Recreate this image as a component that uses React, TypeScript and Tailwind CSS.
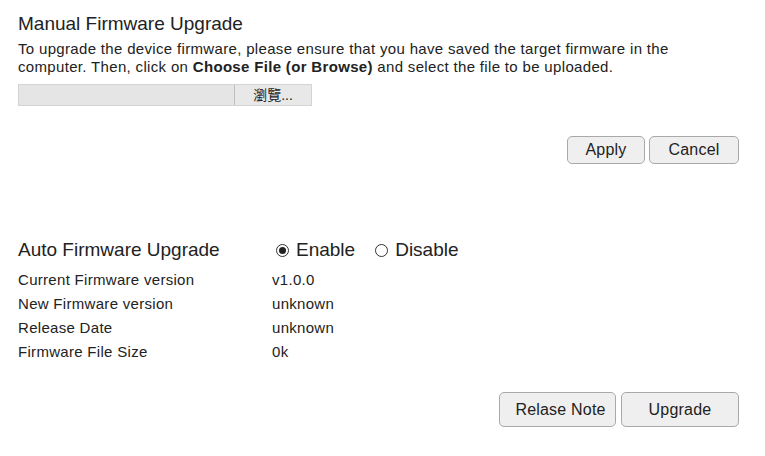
import React, { useState } from 'react';

const rows: [string, string][] = [
  ['Current Firmware version', 'v1.0.0'],
  ['New Firmware version', 'unknown'],
  ['Release Date', 'unknown'],
  ['Firmware File Size', '0k'],
];

function Radio({ checked, label, onClick }: { checked: boolean; label: string; onClick: () => void }) {
  return (
    <button type="button" onClick={onClick} className="flex items-center gap-[7px]">
      <span className="w-[13px] h-[13px] rounded-full border border-[#333] bg-white flex items-center justify-center">
        {checked && <span className="w-[7px] h-[7px] rounded-full bg-[#222]" />}
      </span>
      <span>{label}</span>
    </button>
  );
}

export default function App() {
  const [auto, setAuto] = useState(true);

  const btn =
    'rounded-[5px] border border-[#a9a9a9] bg-[#efefef] text-[16px] tracking-[0.2px] text-[#222] hover:bg-[#e5e5e5]';

  return (
    <div className="w-[765px] h-[456px] bg-white text-[#222] font-['Liberation_Sans',Arial,sans-serif] px-[18px] pt-[12px]">
      <h2 className="text-[19px] leading-[24px]">Manual Firmware Upgrade</h2>
      <p className="text-[15px] leading-[18px] tracking-[0.33px] mt-[4px] w-[700px]">
        To upgrade the device firmware, please ensure that you have saved the target firmware in the
        <br />
        computer. Then, click on <b>Choose File (or Browse)</b> and select the file to be uploaded.
      </p>
      <div className="flex mt-[8px] w-[294px] h-[22px] border border-[#d4d4d4]">
        <div className="flex-1 bg-[#e5e5e5]" />
        <button
          type="button"
          className="w-[77px] bg-[#e8e8e8] border-l border-[#bdbdbd] text-[14px] leading-[20px] font-['Liberation_Sans','Noto_Sans_CJK_TC',sans-serif]"
        >
          瀏覽...
        </button>
      </div>

      <div className="flex justify-end gap-[4px] mt-[30px] pr-[8px]">
        <button type="button" className={`${btn} h-[28px] w-[78px]`}>Apply</button>
        <button type="button" className={`${btn} h-[28px] w-[90px]`}>Cancel</button>
      </div>

      <div className="flex items-center mt-[74px] text-[19px] leading-[24px]">
        <span className="w-[258px]">Auto Firmware Upgrade</span>
        <div className="flex items-center gap-[20px]">
          <Radio checked={auto} label="Enable" onClick={() => setAuto(true)} />
          <Radio checked={!auto} label="Disable" onClick={() => setAuto(false)} />
        </div>
      </div>

      <div className="mt-[6px] text-[15px] tracking-[0.3px]">
        {rows.map(([k, v]) => (
          <div key={k} className="flex h-[24px] items-center">
            <span className="w-[254px]">{k}</span>
            <span>{v}</span>
          </div>
        ))}
      </div>

      <div className="flex justify-end gap-[5px] mt-[28px] pr-[8px]">
        <button type="button" className={`${btn} h-[35px] w-[117px] pl-[6px]`}>Relase Note</button>
        <button type="button" className={`${btn} h-[35px] w-[118px]`}>Upgrade</button>
      </div>
    </div>
  );
}
